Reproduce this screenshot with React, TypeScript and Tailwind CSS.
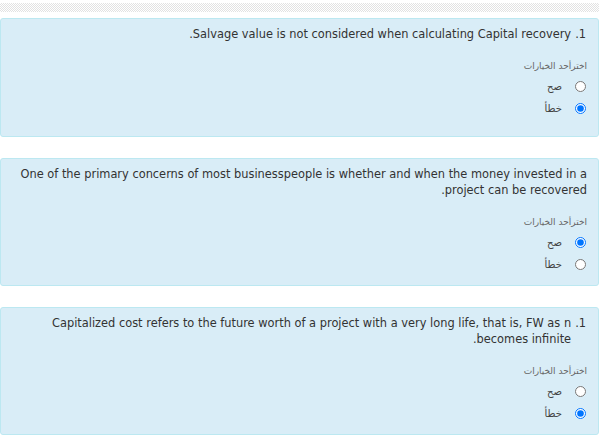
import React from 'react';

type Question = {
  num?: string;
  text: string;
  answer: 'true' | 'false';
};

const questions: Question[] = [
  { num: '1.', text: 'Salvage value is not considered when calculating Capital recovery.', answer: 'false' },
  {
    text: 'One of the primary concerns of most businesspeople is whether and when the money invested in a project can be recovered.',
    answer: 'true',
  },
  {
    num: '1.',
    text: 'Capitalized cost refers to the future worth of a project with a very long life, that is, FW as n becomes infinite.',
    answer: 'false',
  },
];

function QuestionCard({ q, idx }: { q: Question; idx: number }) {
  return (
    <div
      dir="rtl"
      className="min-h-[119px] rounded-[3px] border border-[#bce8f1] bg-[#d9edf7] pt-[7px] pr-[11px] pb-[10px] pl-[12px]"
    >
      <div className="flex text-[11.4px] leading-[16px] text-[#333] font-['DejaVu_Sans',Verdana,sans-serif]">
        {q.num && <span className="mr-[1px] ml-[4px] shrink-0">{q.num}</span>}
        <div>{q.text}</div>
      </div>

      <div className="mt-4 text-[9px] leading-[16px] text-[#666] font-['DejaVu_Sans',sans-serif]">
        اخترأحد الخيارات
      </div>

      <div className="mt-[1px] flex flex-col">
        {[
          { value: 'true', label: 'صح' },
          { value: 'false', label: 'خطأ' },
        ].map((opt) => (
          <label key={opt.value} className="flex h-[22px] items-center">
            <input
              type="radio"
              name={`q${idx}`}
              value={opt.value}
              defaultChecked={q.answer === opt.value}
              className="m-0 mr-[1px] ml-[13px] h-[11px] w-[11px]"
            />
            <span className="text-[10px] text-[#444] font-['DejaVu_Sans',sans-serif]">{opt.label}</span>
          </label>
        ))}
      </div>
    </div>
  );
}

export default function App() {
  return (
    <div className="min-h-[444px] bg-white pt-[3px]">
      <div className="h-[9px] bg-[repeating-conic-gradient(#e2e2e2_0_25%,#ffffff_0_50%)] bg-[length:2px_2px]" />
      <div className="mt-[6px] flex flex-col gap-[21px]">
        {questions.map((q, i) => (
          <QuestionCard key={i} q={q} idx={i} />
        ))}
      </div>
    </div>
  );
}
